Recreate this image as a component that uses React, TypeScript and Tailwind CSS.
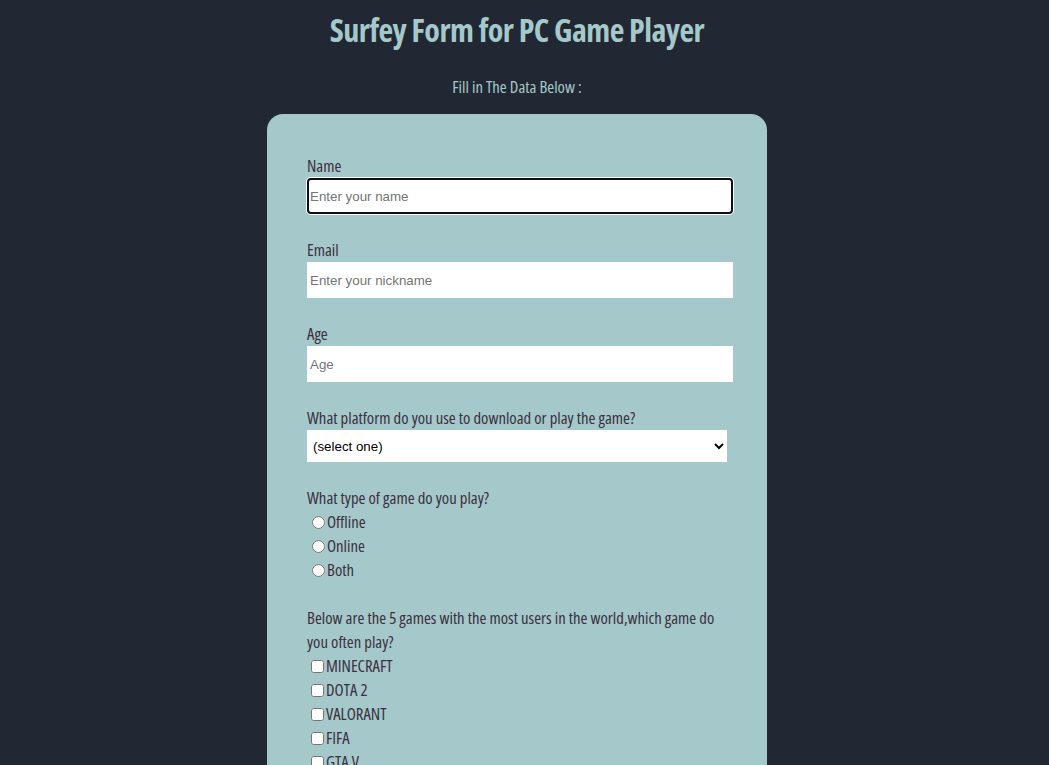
import React from "react";

const cond = "font-['Open_Sans',sans-serif] font-stretch-[75%]";
const labelCls = "block text-[16.7px] leading-[24px] text-[#3a3040]";
const inputBase =
  "block w-[426px] h-[36px] bg-white text-[13.33px] text-black placeholder:text-[#757575] outline-none font-['Liberation_Sans',Arial,sans-serif] font-stretch-normal";
const inputCls = inputBase + " pl-[3px]";

export default function App() {
  return (
    <div className={"min-h-screen bg-[#212833] pb-10 " + cond}>
      <div className="w-[1034px]">
        <h1 className="pt-[9px] h-[52px] text-center text-[32px] leading-[42px] font-bold tracking-[-0.5px] text-[#a5c8ca]">
          Surfey Form for PC Game Player
        </h1>
        <p className="mt-[23px] text-center text-[16.7px] leading-[24px] font-medium text-[#a5c8ca]">
          Fill in The Data Below :
        </p>
        <form className="mx-auto mt-[15px] w-[500px] rounded-[16px] bg-[#a5c8ca] px-10 pt-10 pb-10">
          <label className={labelCls}>Name</label>
          <input
            type="text"
            placeholder="Enter your name"
            className={inputBase + " pl-[1px] rounded-[4px] border-2 border-[#101010] ring-1 ring-white"}
          />
          <label className={labelCls + " mt-6"}>Email</label>
          <input type="text" placeholder="Enter your nickname" className={inputCls} />
          <label className={labelCls + " mt-6"}>Age</label>
          <input type="text" placeholder="Age" className={inputCls} />
          <label className={labelCls + " mt-6"}>What platform do you use to download or play the game?</label>
          <select className="block w-[420px] h-[32px] bg-white pl-[2px] text-[13.33px] text-black font-['Liberation_Sans',Arial,sans-serif] font-stretch-normal">
            <option>(select one)</option>
            <option>Steam</option>
            <option>Epic Games</option>
          </select>
          <p className={labelCls + " mt-6"}>What type of game do you play?</p>
          {["Offline", "Online", "Both"].map((t) => (
            <label key={t} className="flex items-center text-[16.7px] leading-[24px] text-[#3a3040]">
              <input type="radio" name="type" className="ml-[5px] mr-[2px] w-[13px] h-[13px]" />
              {t}
            </label>
          ))}
          <p className={labelCls + " mt-6"}>
            Below are the 5 games with the most users in the world,which game do you often play?
          </p>
          {["MINECRAFT", "DOTA 2", "VALORANT", "FIFA", "GTA V"].map((t) => (
            <label key={t} className="flex items-center text-[16.7px] leading-[24px] text-[#3a3040]">
              <input type="checkbox" className="ml-[4px] mr-[2px] w-[13px] h-[13px]" />
              {t}
            </label>
          ))}
        </form>
      </div>
    </div>
  );
}
